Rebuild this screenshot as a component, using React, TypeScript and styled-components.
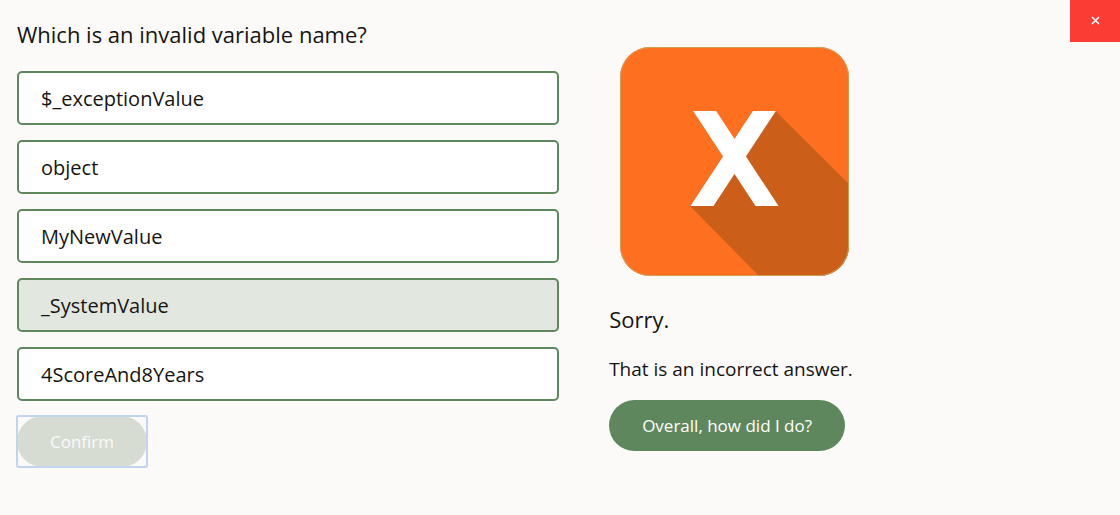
import React, { useState } from "react";
import styled, { createGlobalStyle } from "styled-components";

const GlobalStyle = createGlobalStyle`
  *, *::before, *::after { box-sizing: border-box; }
  body {
    margin: 0;
    background: #fbfaf9;
    color: #161513;
    font-family: "Open Sans", "Noto Sans", sans-serif;
  }
`;

const Page = styled.main`
  display: grid;
  grid-template-columns: minmax(0, 11fr) minmax(0, 10fr);
  column-gap: 50px;
  align-items: start;
  padding: 14px 18px 16px 17px;
`;

const Quiz = styled.form`
  display: flex;
  flex-direction: column;
  align-items: flex-start;
`;

const Question = styled.h1`
  margin: 0 0 17px;
  font-size: 22px;
  line-height: 40px;
  font-weight: 400;
`;

const Options = styled.div`
  display: flex;
  flex-direction: column;
  gap: 15px;
  width: 100%;
  margin-bottom: 15px;
`;

const Option = styled.label<{ $selected: boolean }>`
  display: flex;
  align-items: center;
  height: 54px;
  padding: 2px 22px 0;
  border: 2px solid #5f875d;
  border-radius: 5px;
  background: ${(p) => (p.$selected ? "#e2e7e0" : "#ffffff")};
  font-size: 20px;
  line-height: 28px;
  cursor: pointer;
`;

const HiddenRadio = styled.input`
  appearance: none;
  width: 0;
  height: 0;
  margin: 0;
  outline: none;
`;

const PillButton = styled.button`
  height: 51px;
  padding: 0 33px;
  border: 0;
  border-radius: 26px;
  background: #5f875d;
  color: #ffffff;
  font-family: inherit;
  font-size: 17px;
  line-height: 24px;
  font-weight: 500;
  white-space: nowrap;
  cursor: pointer;
`;

const FocusFrame = styled.div`
  display: flex;
  border-radius: 2px;
  outline: 2px solid #bfd4ee;
  outline-offset: -1px;
`;

const ConfirmButton = styled(PillButton)`
  background: #d6dcd2;
  color: #fbfaf9;
  cursor: default;
`;

const Feedback = styled.section`
  display: flex;
  flex-direction: column;
  align-items: flex-start;
  padding-top: 22px;
`;

const ResultBadge = styled.svg`
  display: block;
  width: 251px;
  height: 251px;
  margin-bottom: 12px;
`;

const FeedbackTitle = styled.h2`
  margin: 0 0 14px;
  font-size: 22px;
  line-height: 40px;
  font-weight: 400;
`;

const FeedbackText = styled.p`
  margin: 0 0 15px;
  font-size: 19px;
  line-height: 32px;
`;

const CloseButton = styled.button`
  position: absolute;
  top: 0;
  right: 0;
  display: flex;
  align-items: center;
  justify-content: center;
  width: 50px;
  height: 42px;
  padding: 0;
  border: 0;
  background: #fa3c34;
  color: #ffffff;
  cursor: pointer;
`;

const answers = [
  "$_exceptionValue",
  "object",
  "MyNewValue",
  "_SystemValue",
  "4ScoreAnd8Years",
];

function WrongAnswerBadge() {
  return (
    <ResultBadge viewBox="-11 -11 251 251" role="img" aria-label="Incorrect">
      <defs>
        <clipPath id="tile">
          <rect width="229" height="229" rx="30" />
        </clipPath>
        <clipPath id="cross">
          <rect x="60" y="64" width="110" height="95" />
        </clipPath>
      </defs>
      <rect width="229" height="229" rx="30" fill="#ff6f20" />
      <g clipPath="url(#tile)">
        <path
          d="M155.5 64L229 137V229H139L70.5 159.5L114 111Z"
          fill="#cb5f19"
        />
      </g>
      <rect
        x="0.5"
        y="0.5"
        width="228"
        height="228"
        rx="29.5"
        fill="none"
        stroke="#cda35a"
        strokeOpacity="0.9"
      />
      <g clipPath="url(#cross)" stroke="#fff" strokeWidth="19.2">
        <line x1="78.1" y1="54" x2="153.6" y2="169" />
        <line x1="150.9" y1="54" x2="75.4" y2="169" />
      </g>
    </ResultBadge>
  );
}

export default function App() {
  const [selected, setSelected] = useState("_SystemValue");

  return (
    <>
      <GlobalStyle />
      <Page>
        <Quiz onSubmit={(e) => e.preventDefault()}>
          <Question id="question">Which is an invalid variable name?</Question>
          <Options role="radiogroup" aria-labelledby="question">
            {answers.map((answer) => (
              <Option key={answer} $selected={answer === selected}>
                <HiddenRadio
                  type="radio"
                  name="answer"
                  value={answer}
                  checked={answer === selected}
                  onChange={() => setSelected(answer)}
                />
                {answer}
              </Option>
            ))}
          </Options>
          <FocusFrame>
            <ConfirmButton type="submit" disabled>
              Confirm
            </ConfirmButton>
          </FocusFrame>
        </Quiz>
        <Feedback>
          <WrongAnswerBadge />
          <FeedbackTitle>Sorry.</FeedbackTitle>
          <FeedbackText>That is an incorrect answer.</FeedbackText>
          <PillButton type="button">Overall, how did I do?</PillButton>
        </Feedback>
      </Page>
      <CloseButton type="button" aria-label="Close">
        <svg width="10" height="10" viewBox="0 0 10 10" aria-hidden="true">
          <path d="M2 1L9 8M9 1L2 8" stroke="currentColor" strokeWidth="1.6" />
        </svg>
      </CloseButton>
    </>
  );
}
